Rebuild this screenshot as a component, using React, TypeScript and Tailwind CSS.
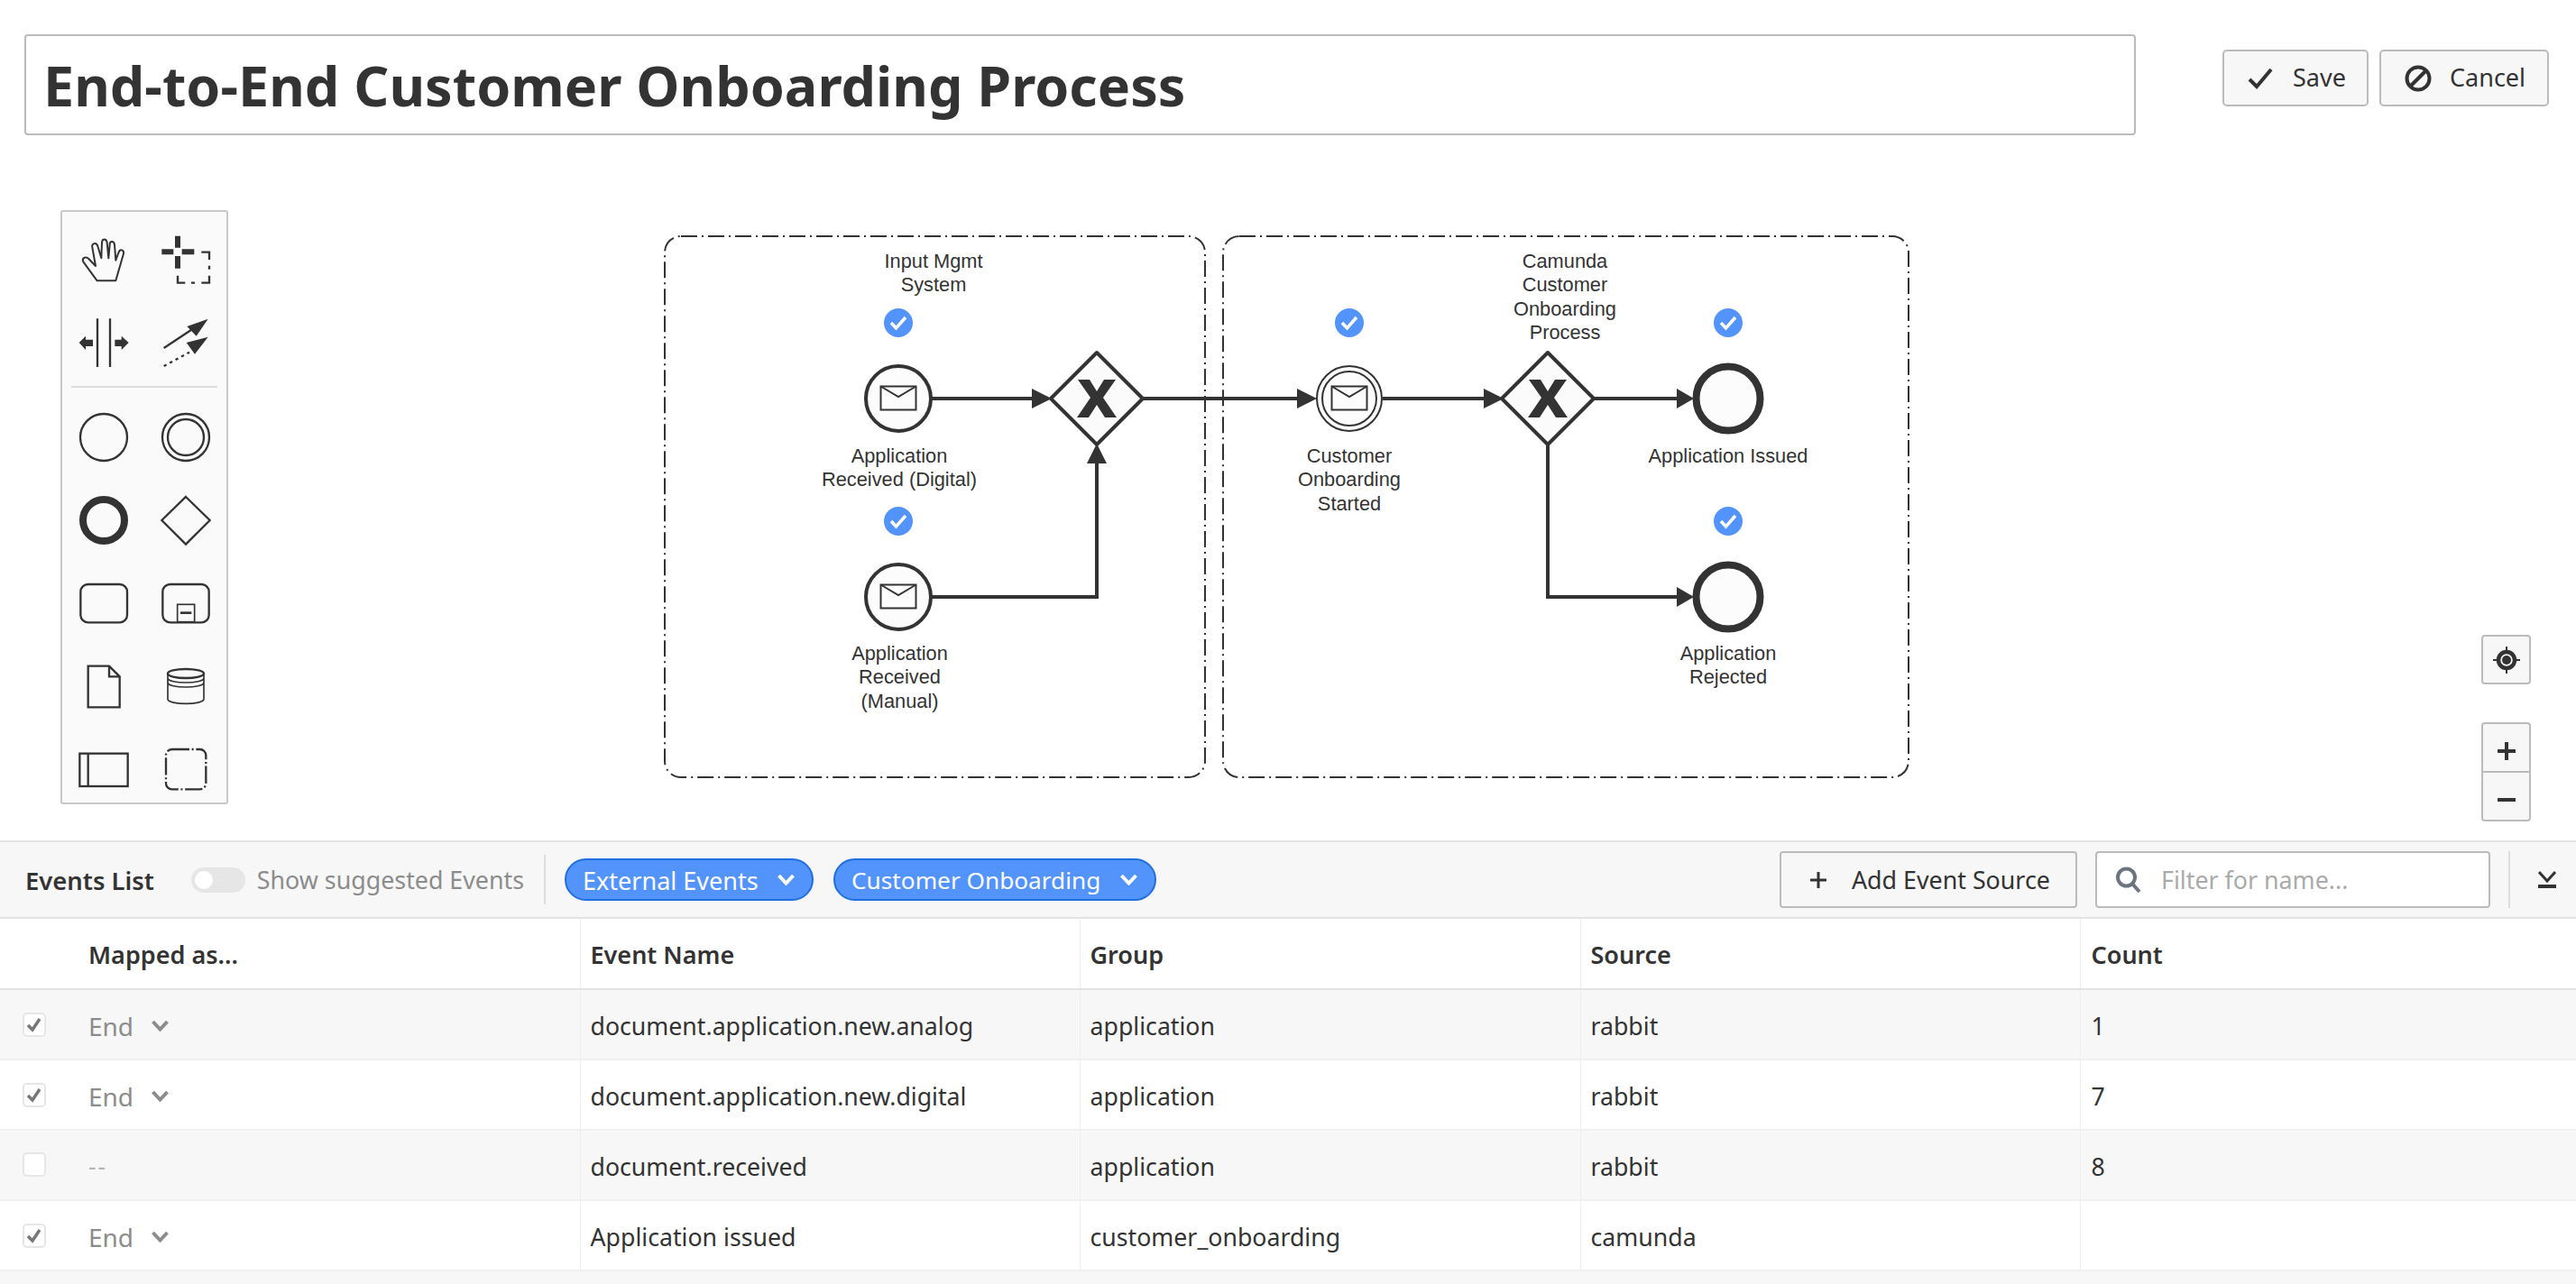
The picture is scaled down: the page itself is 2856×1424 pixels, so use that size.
const ink = '#333333'

function PaletteIcon({ cx, cy, children }: { cx: number; cy: number; children: React.ReactNode }) {
  return (
    <div className="flex h-[64px] w-[92px] items-center justify-center">
      <svg
        width="56"
        height="56"
        viewBox={`${cx - 84} ${cy - 84} 168 168`}
        fill="none"
        stroke={ink}
        strokeWidth="7"
      >
        {children}
      </svg>
    </div>
  )
}

function Palette() {
  return (
    <div className="absolute left-[67px] top-[233px] w-[186px] rounded-[3px] border-2 border-[#c8c8c8] bg-[#fafafa] pb-[5px] pt-[21px]">
      <div className="grid grid-cols-2 gap-y-[28px]">
        <PaletteIcon cx={192} cy={205}>
          <path
            strokeLinejoin="round"
            strokeWidth="6"
            d="M170 275 L232 275 L258 185 C260 172 246 168 242 180 L232 207 L228 155 C226 142 212 142 212 155 L208 200 L203 148 C201 134 187 134 186 148 L184 200 L172 160 C168 146 150 150 154 164 L165 226 L142 202 C132 192 118 200 124 212 Z"
          />
        </PaletteIcon>
        <PaletteIcon cx={468} cy={205}>
          <path strokeWidth="18" d="M388 179 H427 M455 179 H496 M441 126 V165 M441 193 V234" />
          <path d="M520 180 H546 V205 M546 225 V237 M546 258 V282 H520 M498 282 H486 M466 282 H441 V258" />
        </PaletteIcon>
        <PaletteIcon cx={192} cy={482}>
          <path d="M171 402 V563 M213 402 V563" />
          <path
            fill={ink}
            stroke="none"
            d="M110 482 L132 460 V472 H156 V494 H132 V506 Z M275 482 L251 460 V472 H229 V494 H251 V506 Z"
          />
        </PaletteIcon>
        <PaletteIcon cx={468} cy={482}>
          <path d="M395 500 L490 437" />
          <path strokeDasharray="10 12" d="M395 560 L480 514" />
          <path fill={ink} stroke="none" d="M542 403 L472 428 L503 460 Z M542 463 L470 482 L498 520 Z" />
        </PaletteIcon>
      </div>
      <div className="mx-[10px] mb-[23px] mt-[16px] h-[2px] bg-[#dddddd]" />
      <div className="grid grid-cols-2 gap-y-[28px]">
        <PaletteIcon cx={192} cy={795}>
          <circle cx="192" cy="795" r="78" />
        </PaletteIcon>
        <PaletteIcon cx={468} cy={795}>
          <circle cx="468" cy="795" r="78" />
          <circle cx="468" cy="795" r="60" />
        </PaletteIcon>
        <PaletteIcon cx={192} cy={80}>
          <circle cx="192" cy="80" r="69" strokeWidth="24" />
        </PaletteIcon>
        <PaletteIcon cx={468} cy={80}>
          <path d="M468 2 L548 80 L468 160 L388 80 Z" />
        </PaletteIcon>
        <PaletteIcon cx={192} cy={356}>
          <rect x="115" y="293" width="155" height="127" rx="25" />
        </PaletteIcon>
        <PaletteIcon cx={468} cy={356}>
          <rect x="391" y="293" width="154" height="127" rx="25" />
          <rect x="440" y="360" width="57" height="58" strokeWidth="5" />
          <path strokeWidth="8" d="M450 388 H487" />
        </PaletteIcon>
        <PaletteIcon cx={192} cy={632}>
          <path d="M140 565 H210 L245 600 V702 H140 Z M210 565 V600 H245" />
        </PaletteIcon>
        <PaletteIcon cx={468} cy={632}>
          <ellipse cx="468" cy="590" rx="60" ry="15" />
          <path
            strokeWidth="5"
            d="M408 590 V675 C408 695 528 695 528 675 V590 M408 605 C408 625 528 625 528 605 M408 620 C408 640 528 640 528 620"
          />
        </PaletteIcon>
        <PaletteIcon cx={192} cy={908}>
          <rect x="112" y="856" width="160" height="109" />
          <path d="M140 856 V965" />
        </PaletteIcon>
        <PaletteIcon cx={468} cy={908}>
          <rect x="402" y="842" width="133" height="133" rx="20" strokeDasharray="58 8 6 8" />
        </PaletteIcon>
      </div>
    </div>
  )
}

function Arrow({ points }: { points: string }) {
  return <polygon points={points} fill={ink} />
}

function Gateway({ x, y }: { x: number; y: number }) {
  return (
    <g transform={`translate(${x} ${y})`}>
      <polygon points="0,-51 51,0 0,51 -51,0" fill="#fbfbfb" stroke={ink} strokeWidth="4" strokeLinejoin="round" />
      <polygon
        points="-21,-21 -8,-21 0,-8 8,-21 21,-21 7,-1 22,21 9,21 0,7 -9,21 -22,21 -7,-1"
        fill={ink}
      />
    </g>
  )
}

function Envelope({ x, y }: { x: number; y: number }) {
  return (
    <g transform={`translate(${x} ${y})`} fill="none" stroke={ink} strokeWidth="2">
      <rect x="-19.5" y="-13.5" width="39" height="26" />
      <path d="M-19.5 -13.5 L0 -2 L19.5 -13.5" />
    </g>
  )
}

function Badge({ x, y }: { x: number; y: number }) {
  return (
    <g transform={`translate(${x} ${y})`}>
      <circle r="16" fill="#5294fc" />
      <path d="M-8 0 L-2.5 6 L8 -6" fill="none" stroke="#ffffff" strokeWidth="3.5" />
    </g>
  )
}

function Label({ x, lines }: { x: number; lines: [number, string][] }) {
  return (
    <text textAnchor="middle" fontFamily="'Liberation Sans', Arial, sans-serif" fontSize="21.8" fill={ink}>
      {lines.map(([y, s]) => (
        <tspan key={s} x={x} y={y}>
          {s}
        </tspan>
      ))}
    </text>
  )
}

// bpmn canvas, coordinates are page pixels since the parent starts at 0,0
function Diagram() {
  return (
    <svg className="absolute left-0 top-0" width="2856" height="932" fill="none">
      <g stroke={ink} strokeWidth="2" strokeDasharray="18 5 2 5">
        <rect x="737" y="262" width="599" height="600" rx="18" />
        <rect x="1356" y="262" width="760" height="600" rx="18" />
      </g>
      <path
        stroke={ink}
        strokeWidth="4"
        d="M1033 442 H1146 M1033 662 H1216 V512 M1267 442 H1440 M1533 442 H1647 M1767 442 H1860 M1716 493 V662 H1860"
      />
      <Arrow points="1166,442 1144,431 1144,453" />
      <Arrow points="1216,492 1205,514 1227,514" />
      <Arrow points="1460,442 1438,431 1438,453" />
      <Arrow points="1667,442 1645,431 1645,453" />
      <Arrow points="1878,442 1859,431 1859,453" />
      <Arrow points="1878,662 1859,651 1859,673" />

      <Gateway x={1216} y={442} />
      <Gateway x={1716} y={442} />

      <circle cx="996" cy="442" r="36" fill="#fcfcfc" stroke={ink} strokeWidth="4" />
      <Envelope x={996} y={442} />
      <circle cx="996" cy="662" r="36" fill="#fcfcfc" stroke={ink} strokeWidth="4" />
      <Envelope x={996} y={662} />

      <circle cx="1496" cy="442" r="36" fill="#fcfcfc" stroke={ink} strokeWidth="2" />
      <circle cx="1496" cy="442" r="30" fill="#fcfcfc" stroke={ink} strokeWidth="2" />
      <Envelope x={1496} y={442} />

      <circle cx="1916" cy="442" r="35.5" fill="#fcfcfc" stroke={ink} strokeWidth="8" />
      <circle cx="1916" cy="662" r="35.5" fill="#fcfcfc" stroke={ink} strokeWidth="8" />

      <Badge x={996} y={358} />
      <Badge x={996} y={578} />
      <Badge x={1496} y={358} />
      <Badge x={1916} y={358} />
      <Badge x={1916} y={578} />

      <Label x={1035} lines={[[296.5, 'Input Mgmt'], [322.5, 'System']]} />
      <Label x={997} lines={[[512.5, 'Application'], [538.5, 'Received (Digital)']]} />
      <Label x={997.5} lines={[[732, 'Application'], [758, 'Received'], [785, '(Manual)']]} />
      <Label x={1735} lines={[[296.5, 'Camunda'], [322.5, 'Customer'], [349.5, 'Onboarding'], [375.5, 'Process']]} />
      <Label x={1496} lines={[[512.5, 'Customer'], [538.5, 'Onboarding'], [565.5, 'Started']]} />
      <Label x={1916} lines={[[512.5, 'Application Issued']]} />
      <Label x={1916} lines={[[732, 'Application'], [758, 'Rejected']]} />
    </svg>
  )
}

function ZoomControls() {
  return (
    <div className="absolute right-[50px] top-[704px] flex w-[55px] flex-col gap-[42px]">
      <button className="flex h-[55px] items-center justify-center rounded-[4px] border-2 border-[#bbbbbb] bg-[#f7f7f7]">
        <svg width="30" height="30" viewBox="0 0 30 30" fill="none" stroke={ink}>
          <circle cx="15" cy="15" r="9" strokeWidth="4.5" />
          <circle cx="15" cy="15" r="5" fill={ink} stroke="none" />
          <path strokeWidth="2" d="M15 0 V6 M15 24 V30 M0 15 H6 M24 15 H30" />
        </svg>
      </button>
      <div className="flex h-[110px] flex-col rounded-[4px] border-2 border-[#bbbbbb] bg-[#f7f7f7]">
        <button className="flex flex-1 items-center justify-center border-b-2 border-[#bbbbbb] pt-[8px]">
          <svg width="20" height="20" viewBox="0 0 20 20" fill={ink}>
            <path d="M8 0 H12 V8 H20 V12 H12 V20 H8 V12 H0 V8 H8 Z" />
          </svg>
        </button>
        <button className="flex flex-1 items-center justify-center pt-[8px]">
          <svg width="20" height="4" viewBox="0 0 20 4" fill={ink}>
            <rect width="20" height="4" />
          </svg>
        </button>
      </div>
    </div>
  )
}

function Chevron({ color }: { color: string }) {
  return (
    <svg width="19" height="13" viewBox="0 0 19 13" fill="none" stroke={color} strokeWidth="4">
      <path d="M1.5 2 L9.5 10.5 L17.5 2" />
    </svg>
  )
}

function FilterPill({ label, className }: { label: string; className: string }) {
  return (
    <button
      className={`flex h-[47px] items-center justify-between rounded-full border-2 border-[#1f6fe0] bg-[#5294fc] pl-[18px] pr-[19px] leading-none text-white ${className}`}
    >
      <span className="pt-[2px]">{label}</span>
      <Chevron color="#ffffff" />
    </button>
  )
}

const rows = [
  { checked: true, name: 'document.application.new.analog', group: 'application', source: 'rabbit', count: '1' },
  { checked: true, name: 'document.application.new.digital', group: 'application', source: 'rabbit', count: '7' },
  { checked: false, name: 'document.received', group: 'application', source: 'rabbit', count: '8' },
  { checked: true, name: 'Application issued', group: 'customer_onboarding', source: 'camunda', count: '' },
]

function EventsTable() {
  return (
    <table className="w-full table-fixed text-[26.7px] text-[#333333]">
      <colgroup>
        <col className="w-[643px]" />
        <col className="w-[554px]" />
        <col className="w-[555px]" />
        <col className="w-[554px]" />
        <col />
      </colgroup>
      <thead>
        <tr className="h-[78px] border-b-2 border-[#e2e2e2] text-left text-[27px]">
          <th className="border-r border-[#eeeeee] pl-[98px] pt-[3px] font-semibold">Mapped as...</th>
          <th className="border-r border-[#eeeeee] pl-[11px] pt-[3px] font-semibold">Event Name</th>
          <th className="border-r border-[#eeeeee] pl-[11px] pt-[3px] font-semibold">Group</th>
          <th className="border-r border-[#eeeeee] pl-[11px] pt-[3px] font-semibold">Source</th>
          <th className="pl-[12px] pt-[3px] font-semibold">Count</th>
        </tr>
      </thead>
      <tbody>
        {rows.map((row, i) => (
          <tr key={row.name} className={`h-[78px] border-b-2 border-[#f0f0f0] ${i % 2 === 0 ? 'bg-[#f7f7f7]' : 'bg-white'}`}>
            <td className="border-r border-[#eeeeee]">
              <div className="flex items-center">
                <span className="ml-[25px] mr-[47px] flex h-[27px] w-[26px] items-center justify-center rounded-[5px] border-2 border-[#e6e6e6] bg-white">
                  {row.checked && (
                    <svg width="20" height="20" viewBox="0 0 20 20" fill="none" stroke="#777777" strokeWidth="3.5">
                      <path d="M3 11 L8 16 L16 4" />
                    </svg>
                  )}
                </span>
                {row.checked ? (
                  <span className="flex items-center gap-[20px] pt-[3px] text-[28px] text-[#8c8c8c]">
                    End
                    <Chevron color="#8c8c8c" />
                  </span>
                ) : (
                  <span className="pt-[3px] tracking-[2px] text-[#b5b5b5]">--</span>
                )}
              </div>
            </td>
            <td className="border-r border-[#eeeeee] pl-[11px] pt-[5px]">{row.name}</td>
            <td className="border-r border-[#eeeeee] pl-[11px] pt-[5px]">{row.group}</td>
            <td className="border-r border-[#eeeeee] pl-[11px] pt-[5px]">{row.source}</td>
            <td className="pl-[12px] pt-[5px]">{row.count}</td>
          </tr>
        ))}
        <tr className="h-[78px] bg-[#f7f7f7]">
          <td colSpan={5} />
        </tr>
      </tbody>
    </table>
  )
}

export default function App() {
  return (
    <div className="h-[1424px] w-[2856px] overflow-hidden bg-white font-['Noto_Sans',sans-serif] text-[#333333]">
      <div className="relative h-[932px]">
        <Diagram />
        <Palette />
        <ZoomControls />
        <div className="relative flex items-start justify-between pl-[27px] pr-[30px] pt-[38px]">
          <div className="flex h-[112px] w-[2341px] items-center rounded-[4px] border-2 border-[#bbbbbb] bg-white pl-[19px] text-[61px] font-bold leading-none">
            End-to-End Customer Onboarding Process
          </div>
          <div className="mt-[16px] flex gap-[12px] pt-[1px] text-[27px]">
            <button className="flex h-[63px] w-[162px] items-center gap-[22px] rounded-[5px] border-2 border-[#bbbbbb] bg-[#f7f7f7] pl-[26px]">
              <svg width="28" height="24" viewBox="0 0 28 24" fill="none" stroke={ink} strokeWidth="4">
                <path d="M2 13 L10 21 L26 2" />
              </svg>
              Save
            </button>
            <button className="flex h-[63px] w-[188px] items-center gap-[20px] rounded-[5px] border-2 border-[#bbbbbb] bg-[#f7f7f7] pl-[26px]">
              <svg width="30" height="30" viewBox="0 0 30 30" fill="none" stroke={ink} strokeWidth="4">
                <circle cx="15" cy="15" r="12.5" />
                <path d="M6 24 L24 6" />
              </svg>
              Cancel
            </button>
          </div>
        </div>
      </div>

      <div className="flex h-[87px] items-center border-y-2 border-[#e2e2e2] bg-[#f7f7f7] text-[26.8px]">
        <span className="ml-[28px] pt-[2px] text-[27.4px] font-semibold">Events List</span>
        <span className="ml-[41px] flex h-[28px] w-[60px] items-center rounded-full bg-[#e6e6e6] pl-[4px]">
          <span className="h-[20px] w-[20px] rounded-full bg-white" />
        </span>
        <span className="ml-[13px] pt-[2px] text-[#8c8c8c]">Show suggested Events</span>
        <span className="ml-[22px] mr-[21px] h-[55px] w-[2px] bg-[#dddddd]" />
        <div className="flex gap-[22px]">
          <FilterPill label="External Events" className="w-[276px] text-[27px]" />
          <FilterPill label="Customer Onboarding" className="w-[358px] text-[26.2px]" />
        </div>
        <button className="ml-auto flex h-[63px] w-[330px] items-center gap-[27px] rounded-[4px] border-2 border-[#bbbbbb] bg-[#f7f7f7] pl-[31px]">
          <svg width="20" height="20" viewBox="0 0 20 20" fill={ink}>
            <path d="M8.5 1 H11.5 V8.5 H19 V11.5 H11.5 V19 H8.5 V11.5 H1 V8.5 H8.5 Z" />
          </svg>
          <span className="pt-[2px]">Add Event Source</span>
        </button>
        <div className="ml-[20px] flex h-[63px] w-[438px] items-center gap-[21px] rounded-[4px] border-2 border-[#bbbbbb] bg-white pl-[20px]">
          <svg width="30" height="30" viewBox="0 0 30 30" fill="none" stroke="#6b7480" strokeWidth="4">
            <circle cx="12.5" cy="12" r="9.5" />
            <path d="M19 19 L27 28" />
          </svg>
          <input
            className="min-w-0 flex-1 bg-transparent pt-[2px] outline-none placeholder:text-[#aaaaaa]"
            placeholder="Filter for name..."
          />
        </div>
        <span className="ml-[20px] h-[63px] w-[2px] bg-[#dddddd]" />
        <svg className="ml-[31px] mr-[22px]" width="20" height="20" viewBox="0 0 20 20" fill="none" stroke={ink}>
          <path strokeWidth="3" d="M1 1 L10 11 L19 1" />
          <path strokeWidth="4" d="M0 17 H20" />
        </svg>
      </div>

      <EventsTable />
    </div>
  )
}
